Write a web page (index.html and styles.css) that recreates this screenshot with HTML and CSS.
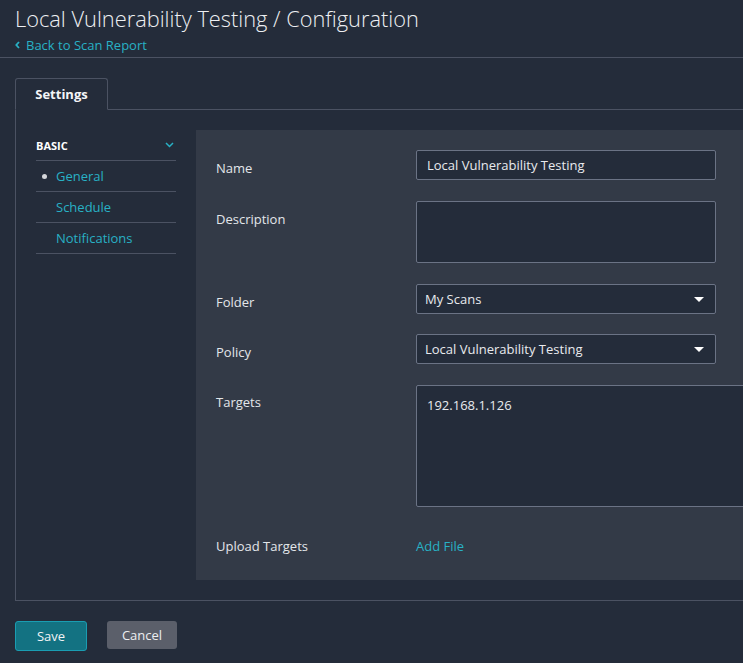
FILE: index.html
```html
<!DOCTYPE html>
<html>
<head>
<meta charset="utf-8">
<title>Local Vulnerability Testing / Configuration</title>
<link rel="stylesheet" href="styles.css">
</head>
<body>
<header class="page-header">
  <h1 class="page-title">Local Vulnerability Testing / Configuration</h1>
  <a class="back-link" href="#"><svg class="back-icon" width="5" height="8" viewBox="0 0 5 8"><path d="M4 1 L1.3 4 L4 7" fill="none" stroke="#28b1c5" stroke-width="1.8"/></svg>Back to Scan Report</a>
</header>

<main class="content">
  <div class="tabs">
    <div class="tab active">Settings</div>
  </div>
  <div class="tab-body">
    <nav class="side-nav">
      <div class="side-head">
        <span>BASIC</span>
        <svg width="9" height="6" viewBox="0 0 9 6"><path d="M1 1 L4.5 4.5 L8 1" fill="none" stroke="#28b1c5" stroke-width="1.5"/></svg>
      </div>
      <a class="side-item current" href="#"><span class="dot"></span>General</a>
      <a class="side-item" href="#"><span class="dot"></span>Schedule</a>
      <a class="side-item" href="#"><span class="dot"></span>Notifications</a>
    </nav>
    <section class="panel">
      <div class="field">
        <label class="field-label">Name</label>
        <div class="input">Local Vulnerability Testing</div>
      </div>
      <div class="field">
        <label class="field-label">Description</label>
        <div class="input textarea"></div>
      </div>
      <div class="field">
        <label class="field-label">Folder</label>
        <div class="input select">My Scans<span class="caret"></span></div>
      </div>
      <div class="field field-policy">
        <label class="field-label">Policy</label>
        <div class="input select">Local Vulnerability Testing<span class="caret"></span></div>
      </div>
      <div class="field">
        <label class="field-label field-label-tall">Targets</label>
        <div class="input targets">192.168.1.126</div>
      </div>
      <div class="field">
        <label class="field-label">Upload Targets</label>
        <a class="add-file" href="#">Add File</a>
      </div>
    </section>
  </div>
  <div class="actions">
    <button class="btn btn-save">Save</button>
    <button class="btn btn-cancel">Cancel</button>
  </div>
</main>
</body>
</html>
```

FILE: styles.css
```css
html, body {
  margin: 0;
  padding: 0;
  background: #242c3a;
  overflow: hidden;
  height: 663px;
}
body {
  font-family: "Open Sans", "Liberation Sans", sans-serif;
  font-size: 13px;
  color: #e3e6ea;
}
a { text-decoration: none; }

.page-header {
  padding: 4px 15px 0;
  border-bottom: 1px solid #4b5262;
  box-sizing: border-box;
  height: 58px;
}
.page-title {
  margin: 0;
  font-weight: 300;
  font-size: 21.8px;
  line-height: 30px;
  color: #eef0f3;
}
.back-link {
  display: inline-flex;
  align-items: center;
  color: #28b1c5;
  font-size: 13px;
  line-height: 18px;
  margin-top: 2px;
}
.back-icon { margin-right: 6px; }

.content {
  padding: 20px 0 0 15px;
  width: 860px;
}
.tabs {
  display: flex;
  border-bottom: 1px solid #4b5262;
  height: 31px;
}
.tab {
  width: 93px;
  border: 1px solid #4b5262;
  border-bottom-color: #242c3a;
  border-radius: 3px 3px 0 0;
  box-sizing: border-box;
  height: 32px;
  font-weight: 700;
  font-size: 13px;
  color: #f4f5f7;
  display: flex;
  align-items: center;
  justify-content: center;
}
.tab-body {
  display: flex;
  gap: 20px;
  border-left: 1px solid #4b5262;
  border-bottom: 1px solid #4b5262;
  padding: 20px 0 20px 20px;
}

.side-nav {
  width: 140px;
  display: flex;
  flex-direction: column;
}
.side-head {
  height: 30px;
  display: flex;
  align-items: center;
  justify-content: space-between;
  padding-right: 2px;
  border-bottom: 1px solid #4b5262;
  font-weight: 700;
  font-size: 11px;
  color: #ffffff;
}
.side-item {
  height: 30px;
  display: flex;
  align-items: center;
  border-bottom: 1px solid #4b5262;
  color: #28b1c5;
  font-size: 13px;
}
.dot {
  width: 5px;
  height: 5px;
  border-radius: 50%;
  margin: 0 9px 0 6px;
  background: transparent;
}
.current .dot { background: #d4d6da; }

.panel {
  flex: 1;
  background: #333a47;
  padding: 20px 0 25px 20px;
  display: flex;
  flex-direction: column;
  gap: 21px;
}
.field {
  display: flex;
}
.field-policy { margin-top: -1px; }
.field-label {
  width: 200px;
  flex: none;
  padding-top: 9px;
  line-height: 18px;
  color: #e3e6ea;
}
.field-label-tall { padding-top: 8px; }
.input {
  width: 300px;
  height: 30px;
  box-sizing: border-box;
  border: 1px solid #6b7385;
  border-radius: 2px;
  background: #242c3a;
  padding: 0 10px;
  line-height: 28px;
  color: #e8eaee;
}
.textarea { height: 62px; }
.select {
  display: flex;
  align-items: center;
  justify-content: space-between;
  padding: 0 11px 0 8px;
}
.caret {
  width: 0;
  height: 0;
  border-left: 5px solid transparent;
  border-right: 5px solid transparent;
  border-top: 5px solid #ffffff;
}
.targets {
  width: 400px;
  height: 122px;
  padding-top: 9px;
  line-height: 20px;
}
.add-file {
  color: #28b1c5;
  padding-top: 9px;
  line-height: 18px;
}

.actions {
  display: flex;
  gap: 20px;
  margin-top: 20px;
  align-items: flex-start;
}
.btn {
  font-family: "Open Sans", "Liberation Sans", sans-serif;
  font-size: 13px;
  border-radius: 3px;
  box-sizing: border-box;
  cursor: pointer;
}
.btn-save {
  width: 72px;
  height: 30px;
  background: #137282;
  border: 1px solid #1a9db2;
  color: #f2f4f6;
}
.btn-cancel {
  width: 70px;
  height: 28px;
  background: #5b5f6a;
  border: none;
  color: #eceef1;
}
```
